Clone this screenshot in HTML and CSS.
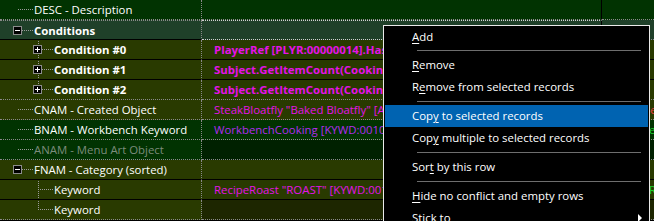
FILE: index.html
```html
<!doctype html>
<html lang="en">
<head>
    <meta charset="UTF-8">
    <title>Record view</title>
    <link rel="stylesheet" href="styles.css">
</head>
<body>
    <!-- record tree -->
    <div class="tree">
        <div class="row row-green">
            <div class="cell cell-name">
                <span class="gutter gutter-leaf"></span>
                <span class="name">DESC - Description</span>
            </div>
            <div class="cell cell-value"></div>
            <div class="cell cell-extra"></div>
        </div>
        <div class="row row-selected row-dotted">
            <div class="cell cell-name">
                <span class="gutter gutter-leaf"><span class="box box-minus"></span></span>
                <span class="name name-bold">Conditions</span>
            </div>
            <div class="cell cell-value cell-focus"></div>
            <div class="cell cell-extra"></div>
        </div>
        <div class="row row-olive row-child">
            <div class="cell cell-name">
                <span class="gutter"></span>
                <span class="gutter gutter-leaf gutter-pipe"><span class="box box-plus"></span></span>
                <span class="name name-bold">Condition #0</span>
            </div>
            <div class="cell cell-value"><span class="value value-bold">PlayerRef [PLYR:00000014].HasPerk(ChemistPerk) = 1</span></div>
            <div class="cell cell-extra"></div>
        </div>
        <div class="row row-olive row-child">
            <div class="cell cell-name">
                <span class="gutter"></span>
                <span class="gutter gutter-leaf gutter-pipe"><span class="box box-plus"></span></span>
                <span class="name name-bold">Condition #1</span>
            </div>
            <div class="cell cell-value"><span class="value value-bold">Subject.GetItemCount(CookingPot) &gt;= 1</span></div>
            <div class="cell cell-extra"></div>
        </div>
        <div class="row row-olive">
            <div class="cell cell-name">
                <span class="gutter"></span>
                <span class="gutter gutter-leaf gutter-end"><span class="box box-plus"></span></span>
                <span class="name name-bold">Condition #2</span>
            </div>
            <div class="cell cell-value"><span class="value value-bold">Subject.GetItemCount(CookingFire) &gt;= 1</span></div>
            <div class="cell cell-extra"></div>
        </div>
        <div class="row row-olive">
            <div class="cell cell-name">
                <span class="gutter gutter-leaf"></span>
                <span class="name">CNAM - Created Object</span>
            </div>
            <div class="cell cell-value"><span class="value">SteakBloatfly "Baked Bloatfly" [ALCH:00247B8E]</span></div>
            <div class="cell cell-extra"><span class="extra extra-red">SteakBeefy "Baked Beef"</span></div>
        </div>
        <div class="row row-green">
            <div class="cell cell-name">
                <span class="gutter gutter-leaf"></span>
                <span class="name">BNAM - Workbench Keyword</span>
            </div>
            <div class="cell cell-value"><span class="value value-purple">WorkbenchCooking [KYWD:00102158]</span></div>
            <div class="cell cell-extra"><span class="extra extra-green">WorkbenchCooking [KYWD]</span></div>
        </div>
        <div class="row row-green row-empty">
            <div class="cell cell-name">
                <span class="gutter gutter-leaf"></span>
                <span class="name name-muted">ANAM - Menu Art Object</span>
            </div>
            <div class="cell cell-value"></div>
            <div class="cell cell-extra"></div>
        </div>
        <div class="row row-olive row-child">
            <div class="cell cell-name">
                <span class="gutter gutter-leaf"><span class="box box-minus"></span></span>
                <span class="name">FNAM - Category (sorted)</span>
            </div>
            <div class="cell cell-value"></div>
            <div class="cell cell-extra"></div>
        </div>
        <div class="row row-olive row-child">
            <div class="cell cell-name">
                <span class="gutter"></span>
                <span class="gutter gutter-leaf gutter-pipe"></span>
                <span class="name">Keyword</span>
            </div>
            <div class="cell cell-value"><span class="value">RecipeRoast "ROAST" [KYWD:0010F2A4]</span></div>
            <div class="cell cell-extra"><span class="extra extra-green">RecipeRoast "ROAST"</span></div>
        </div>
        <div class="row row-olive row-last">
            <div class="cell cell-name">
                <span class="gutter"></span>
                <span class="gutter gutter-leaf gutter-end"></span>
                <span class="name">Keyword</span>
            </div>
            <div class="cell cell-value"></div>
            <div class="cell cell-extra"></div>
        </div>
    </div>

    <!-- context menu -->
    <div class="menu">
        <div class="menu-item"><u>A</u>dd</div>
        <div class="menu-separator menu-separator-first"></div>
        <div class="menu-item"><u>R</u>emove</div>
        <div class="menu-item">R<u>e</u>move from selected records</div>
        <div class="menu-separator"></div>
        <div class="menu-item menu-item-active">Cop<u>y</u> to selected records</div>
        <div class="menu-item">Cop<u>y</u> multiple to selected records</div>
        <div class="menu-separator"></div>
        <div class="menu-item">Sor<u>t</u> by this row</div>
        <div class="menu-separator"></div>
        <div class="menu-item"><u>H</u>ide no conflict and empty rows</div>
        <div class="menu-item menu-item-sub">Stick to<svg class="menu-arrow" width="5" height="8" viewBox="0 0 5 8"><path d="M0 0 L4 4 L0 8 Z" fill="#fff"/></svg></div>
    </div>
</body>
</html>
```

FILE: styles.css
```css
body {
    margin: 0;
    background-color: #000;
    font-family: "Open Sans", "Noto Sans", sans-serif;
    font-size: 11.4px;
    color: #fff;
    overflow: hidden;
}

.tree {
    width: 654px;
}

.row {
    display: flex;
    height: 20px;
}

.cell {
    display: flex;
    align-items: center;
    box-sizing: border-box;
    height: 20px;
    border-bottom: 1px dotted #8a8a8a;
    white-space: nowrap;
    overflow: hidden;
}

/* child rows use a solid dark line */
.row-child .cell {
    border-bottom: 1px solid #000;
}

.cell-name {
    width: 202px;
    padding-left: 8px;
    border-right: 1px dotted #8a8a8a;
}

.cell-value {
    width: 400px;
    padding-left: 12px;
    border-right: 1px solid #000;
}

.cell-extra {
    flex: 1;
    padding-left: 12px;
}

.row-green .cell {
    background-color: #013301;
}

.row-empty .cell-value,
.row-empty .cell-extra {
    background-color: #002100;
}

.row-selected .cell {
    background-color: #1f4029;
}

.row-olive .cell {
    background-color: #293a00;
}

.row-last .cell-value,
.row-last .cell-extra {
    background-color: #1d2600;
}

/* focus rectangle on the selected value cell */
.cell-focus {
    border-top: 1px dotted #d0d0d0;
    border-bottom: 1px dotted #d0d0d0;
}

.row-dotted .cell-name {
    border-top: 1px dotted #8a8a8a;
    border-bottom: 1px solid #000;
}

/* tree lines */
.gutter {
    position: relative;
    flex: none;
    width: 20px;
    height: 100%;
}

.gutter-leaf::before {
    content: "";
    position: absolute;
    left: 10px;
    right: -5px;
    top: 9px;
    border-top: 1px dotted #9a9a9a;
}

.gutter-pipe::after,
.gutter-end::after {
    content: "";
    position: absolute;
    left: 10px;
    top: -1px;
    bottom: -1px;
    border-left: 1px dotted #9a9a9a;
}

.gutter-end::after {
    bottom: auto;
    height: 11px;
}

.box {
    position: absolute;
    z-index: 1;
    left: 5px;
    top: 5px;
    width: 9px;
    height: 9px;
    box-sizing: border-box;
    border: 1px solid #8c8c8c;
    background-color: #000;
}

.box::before,
.box::after {
    content: "";
    position: absolute;
    background-color: #fff;
}

.box::before {
    left: 1px;
    top: 3px;
    width: 5px;
    height: 1px;
}

.box-plus::after {
    left: 3px;
    top: 1px;
    width: 1px;
    height: 5px;
}

.name {
    margin-left: 6px;
}

.name-bold {
    font-weight: bold;
}

.name-muted {
    color: #7c8c7c;
}

.value {
    color: #e512e8;
}

.value-bold {
    font-weight: bold;
}

.value-purple {
    color: #b22cf0;
}

.extra-red {
    color: #e84040;
}

.extra-green {
    color: #1fcf2f;
}

/* context menu */
.menu {
    position: absolute;
    left: 383px;
    top: 25px;
    width: 267px;
    height: 196px;
    box-sizing: border-box;
    border: 1px solid #eaeaea;
    border-bottom: none;
    background-color: #000;
    padding: 0 1px;
    overflow: hidden;
}

.menu-item {
    height: 22px;
    line-height: 22px;
    padding-left: 27px;
    white-space: nowrap;
}

.menu-item u {
    text-underline-offset: 2px;
}

.menu-item-active {
    background-color: #0063b1;
}

.menu-item-sub {
    position: relative;
}

.menu-arrow {
    position: absolute;
    right: 5px;
    top: 7px;
}

.menu-separator {
    height: 1px;
    margin: 3px 7px 3px 32px;
    background-color: #6e6e6e;
}

.menu-separator-first {
    margin-top: 2px;
}
```
